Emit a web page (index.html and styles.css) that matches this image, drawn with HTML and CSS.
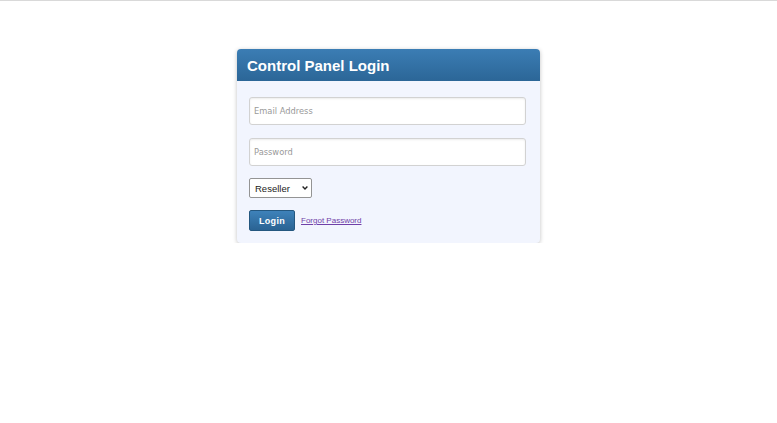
FILE: index.html
```html
<!DOCTYPE html>
<html>
<head>
<meta charset="utf-8">
<link rel="stylesheet" href="styles.css">
</head>
<body>
<div class="page">
  <div class="card">
    <div class="card-head"><h1 class="title">Control Panel Login</h1></div>
    <form class="card-body">
      <input class="field" type="text" placeholder="Email Address">
      <input class="field" type="password" placeholder="Password">
      <div class="select-wrap">
        <select class="role"><option>Reseller</option></select>
        <svg class="chev" width="6" height="4" viewBox="0 0 6 4"><path d="M0.6 0.6 L3 3 L5.4 0.6" fill="none" stroke="#222" stroke-width="1.4"/></svg>
      </div>
      <div class="actions">
        <button class="btn" type="button">Login</button>
        <a class="link" href="#">Forgot Password</a>
      </div>
    </form>
  </div>
</div>
</body>
</html>
```
FILE: styles.css
```css
html, body { margin: 0; padding: 0; background: #fff; }
body { border-top: 1px solid #d9d9d9; font-family: "Liberation Sans", Arial, sans-serif; }
.page { display: flex; justify-content: center; padding-top: 48px; }
.card {
  width: 303px;
  border-radius: 4px;
  background: #f2f5fe;
  box-shadow: 0 1px 4px rgba(0,0,0,0.25);
  overflow: hidden;
}
.card-head {
  height: 32px;
  display: flex;
  align-items: center;
  padding-left: 10px;
  background: linear-gradient(#3b7db4, #2b6697);
}
.title { margin: 0; color: #fff; font-size: 15px; font-weight: bold; line-height: 1; }
.card-body {
  display: flex;
  flex-direction: column;
  align-items: flex-start;
  padding: 16px 12px 12px;
}
.field {
  box-sizing: border-box;
  width: 277px;
  height: 28px;
  margin: 0 0 13px;
  padding: 0 4px;
  border: 1px solid #d2d2d2;
  border-radius: 3px;
  background: #fff;
  box-shadow: inset 0 1px 2px rgba(0,0,0,0.08);
  font-family: "DejaVu Sans", Verdana, sans-serif;
  font-size: 8.3px;
  color: #333;
  outline: none;
}
.field + .field { margin-bottom: 12px; }
.field::placeholder { color: #999; }
.select-wrap { position: relative; margin: 0 0 12px; }
.role {
  display: block;
  box-sizing: border-box;
  width: 63px;
  height: 20px;
  padding: 0 0 0 5px;
  appearance: none;
  -webkit-appearance: none;
  font-family: "Liberation Sans", Arial, sans-serif;
  font-size: 9.5px;
  color: #222;
  border: 1px solid #949494;
  border-radius: 2px;
  background: #fff;
  outline: none;
}
.chev { position: absolute; right: 4px; top: 8px; pointer-events: none; }
.actions { display: flex; align-items: center; gap: 6px; }
.btn {
  box-sizing: border-box;
  width: 46px;
  height: 21px;
  padding: 0;
  border: 1px solid #24577f;
  border-radius: 2px;
  background: linear-gradient(#3e82ba, #2a6393);
  color: #fff;
  font-family: "Liberation Sans", Arial, sans-serif;
  font-size: 9px;
  font-weight: bold;
  letter-spacing: 0.3px;
}
.link {
  color: #7040a8;
  font-size: 8px;
  text-decoration: underline;
  font-family: "Liberation Sans", Arial, sans-serif;
}
```
